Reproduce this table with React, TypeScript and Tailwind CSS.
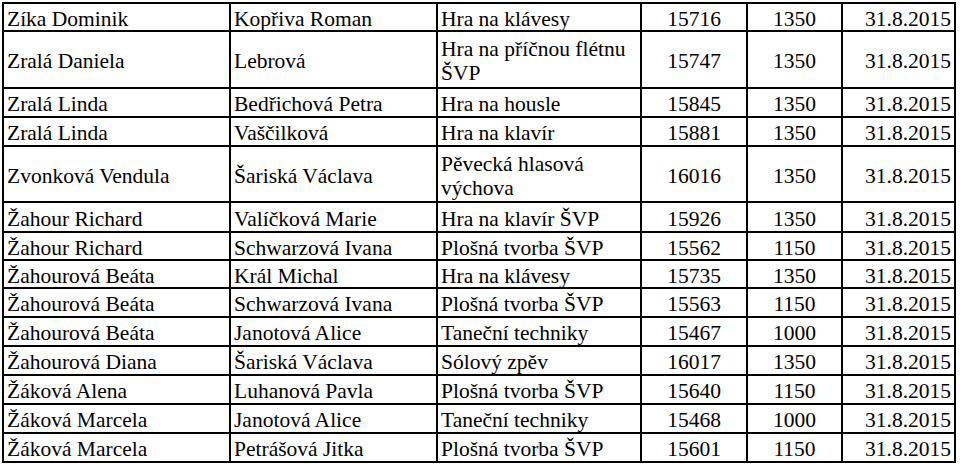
import React from "react";

type Row = [string, string, string, string, string, string];

const rows: Row[] = [
  ["Zíka Dominik", "Kopřiva Roman", "Hra na klávesy", "15716", "1350", "31.8.2015"],
  ["Zralá Daniela", "Lebrová", "Hra na příčnou flétnu ŠVP", "15747", "1350", "31.8.2015"],
  ["Zralá Linda", "Bedřichová Petra", "Hra na housle", "15845", "1350", "31.8.2015"],
  ["Zralá Linda", "Vaščilková", "Hra na klavír", "15881", "1350", "31.8.2015"],
  ["Zvonková Vendula", "Šariská Václava", "Pěvecká hlasová výchova", "16016", "1350", "31.8.2015"],
  ["Žahour Richard", "Valíčková Marie", "Hra na klavír ŠVP", "15926", "1350", "31.8.2015"],
  ["Žahour Richard", "Schwarzová Ivana", "Plošná tvorba ŠVP", "15562", "1150", "31.8.2015"],
  ["Žahourová Beáta", "Král Michal", "Hra na klávesy", "15735", "1350", "31.8.2015"],
  ["Žahourová Beáta", "Schwarzová Ivana", "Plošná tvorba ŠVP", "15563", "1150", "31.8.2015"],
  ["Žahourová Beáta", "Janotová Alice", "Taneční techniky", "15467", "1000", "31.8.2015"],
  ["Žahourová Diana", "Šariská Václava", "Sólový zpěv", "16017", "1350", "31.8.2015"],
  ["Žáková Alena", "Luhanová Pavla", "Plošná tvorba ŠVP", "15640", "1150", "31.8.2015"],
  ["Žáková Marcela", "Janotová Alice", "Taneční techniky", "15468", "1000", "31.8.2015"],
  ["Žáková Marcela", "Petrášová Jitka", "Plošná tvorba ŠVP", "15601", "1150", "31.8.2015"],
];

// column alignment: text columns left, amounts centred, date right
const align = [
  "justify-start text-left",
  "justify-start text-left",
  "justify-start text-left",
  "justify-center text-center",
  "justify-center text-center",
  "justify-end text-right",
];

const serif = "[font-family:'Liberation_Serif']";

export default function App() {
  return (
    <div className="h-[466px] w-[960px] overflow-hidden bg-white pl-[2px] pt-[2px] text-black">
      <div className="font-serif text-[21.5px] leading-[24px]">
        <div className="grid w-fit grid-cols-[227px_207px_204px_106px_95px_113px] grid-rows-[28px_57px_29px_29px_56px_30px_28px_28px_29px_29px_29px_29px_29px_29px] border-b-2 border-r-2 border-black">
          {rows.map((r, i) =>
            r.map((v, j) => (
              <div
                key={i + "-" + j}
                className={"flex items-center border-l-2 border-t-2 border-black px-[3px] pt-[3px] " + align[j]}
              >
                <span className={serif}>{v}</span>
              </div>
            ))
          )}
        </div>
      </div>
    </div>
  );
}
